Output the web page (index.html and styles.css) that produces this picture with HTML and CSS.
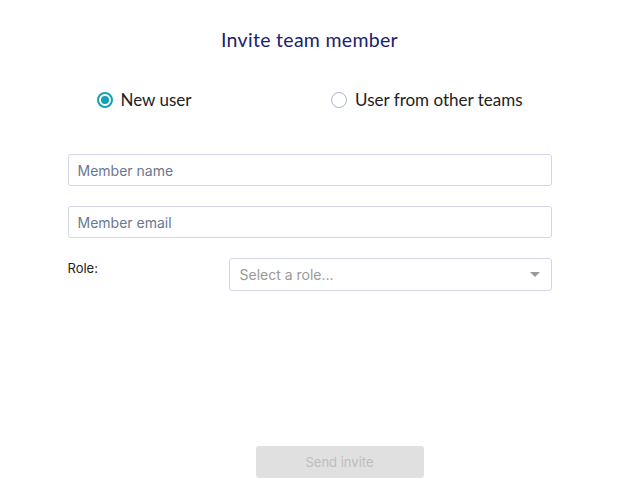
FILE: index.html
```html
<!doctype html>
<html>
<head>
<meta charset="utf-8">
<title>Invite team member</title>
<link rel="stylesheet" href="styles.css">
</head>
<body>

<div class="invite">

    <h1>Invite team member</h1>

    <div class="usertype">
        <label class="radio"><span class="dot checked"></span> New user</label>
        <label class="radio"><span class="dot"></span> User from other teams</label>
    </div>

    <div class="field"><input type="text" placeholder="Member name"></div>
    <div class="field"><input type="text" placeholder="Member email"></div>

    <div class="rolerow">
        <span class="rolelabel">Role:</span>
        <div class="select">
            <span>Select a role...</span>
            <span class="caret"></span>
        </div>
    </div>

    <div class="actions">
        <button type="button" disabled>Send invite</button>
    </div>

</div>

</body>
</html>
```

FILE: styles.css
```css
html, body { margin: 0; padding: 0; background: #fff; }
* { box-sizing: border-box; font-family: Inter, "Noto Sans", sans-serif; }

.invite { width: 484px; margin: 0 auto; padding-top: 29px; height: 497px; display: flex; flex-direction: column; }

h1 { margin: 0; text-align: center; font-family: Lato, sans-serif; font-weight: 400; font-size: 19.5px; line-height: 22px; color: #1b2170; letter-spacing: 0.3px; }

.usertype { display: flex; justify-content: space-between; padding: 0 29px 0 29px; margin-top: 39px; }
.radio { display: flex; align-items: center; gap: 8px; font-family: Lato, sans-serif; font-size: 17px; line-height: 20px; color: #222; }
.dot { width: 16px; height: 16px; border-radius: 50%; border: 1px solid #a9b6d0; display: inline-block; position: relative; }
.dot.checked { border: 2px solid #16a0b3; }
.dot.checked::after { content: ""; position: absolute; left: 2px; top: 2px; width: 8px; height: 8px; border-radius: 50%; background: #16a0b3; }

.field { margin-top: 44px; }
.field + .field { margin-top: 20px; }
input { width: 100%; height: 32px; border: 1px solid #d2d6e6; border-radius: 3px; padding: 0 9px; font-size: 14px; color: #333; outline: none; }
input::placeholder { color: #6b7890; }

.rolerow { display: flex; margin-top: 20px; }
.rolelabel { width: 161px; padding-top: 2px; font-size: 13px; color: #222; }
.select { flex: 1; height: 33px; border: 1px solid #d2d6e6; border-radius: 3px; display: flex; align-items: center; justify-content: space-between; padding: 0 10px 0 10px; font-size: 14px; color: #999; }
.caret { width: 0; height: 0; border-left: 5px solid transparent; border-right: 5px solid transparent; border-top: 5px solid #999; margin-right: 1px; }

.actions { margin-top: auto; margin-bottom: 19px; display: flex; padding-left: 188px; }
button { width: 168px; height: 32px; border: 0; border-radius: 3px; background: #e0e0e0; color: #bdbdbd; font-size: 13px; }
```
